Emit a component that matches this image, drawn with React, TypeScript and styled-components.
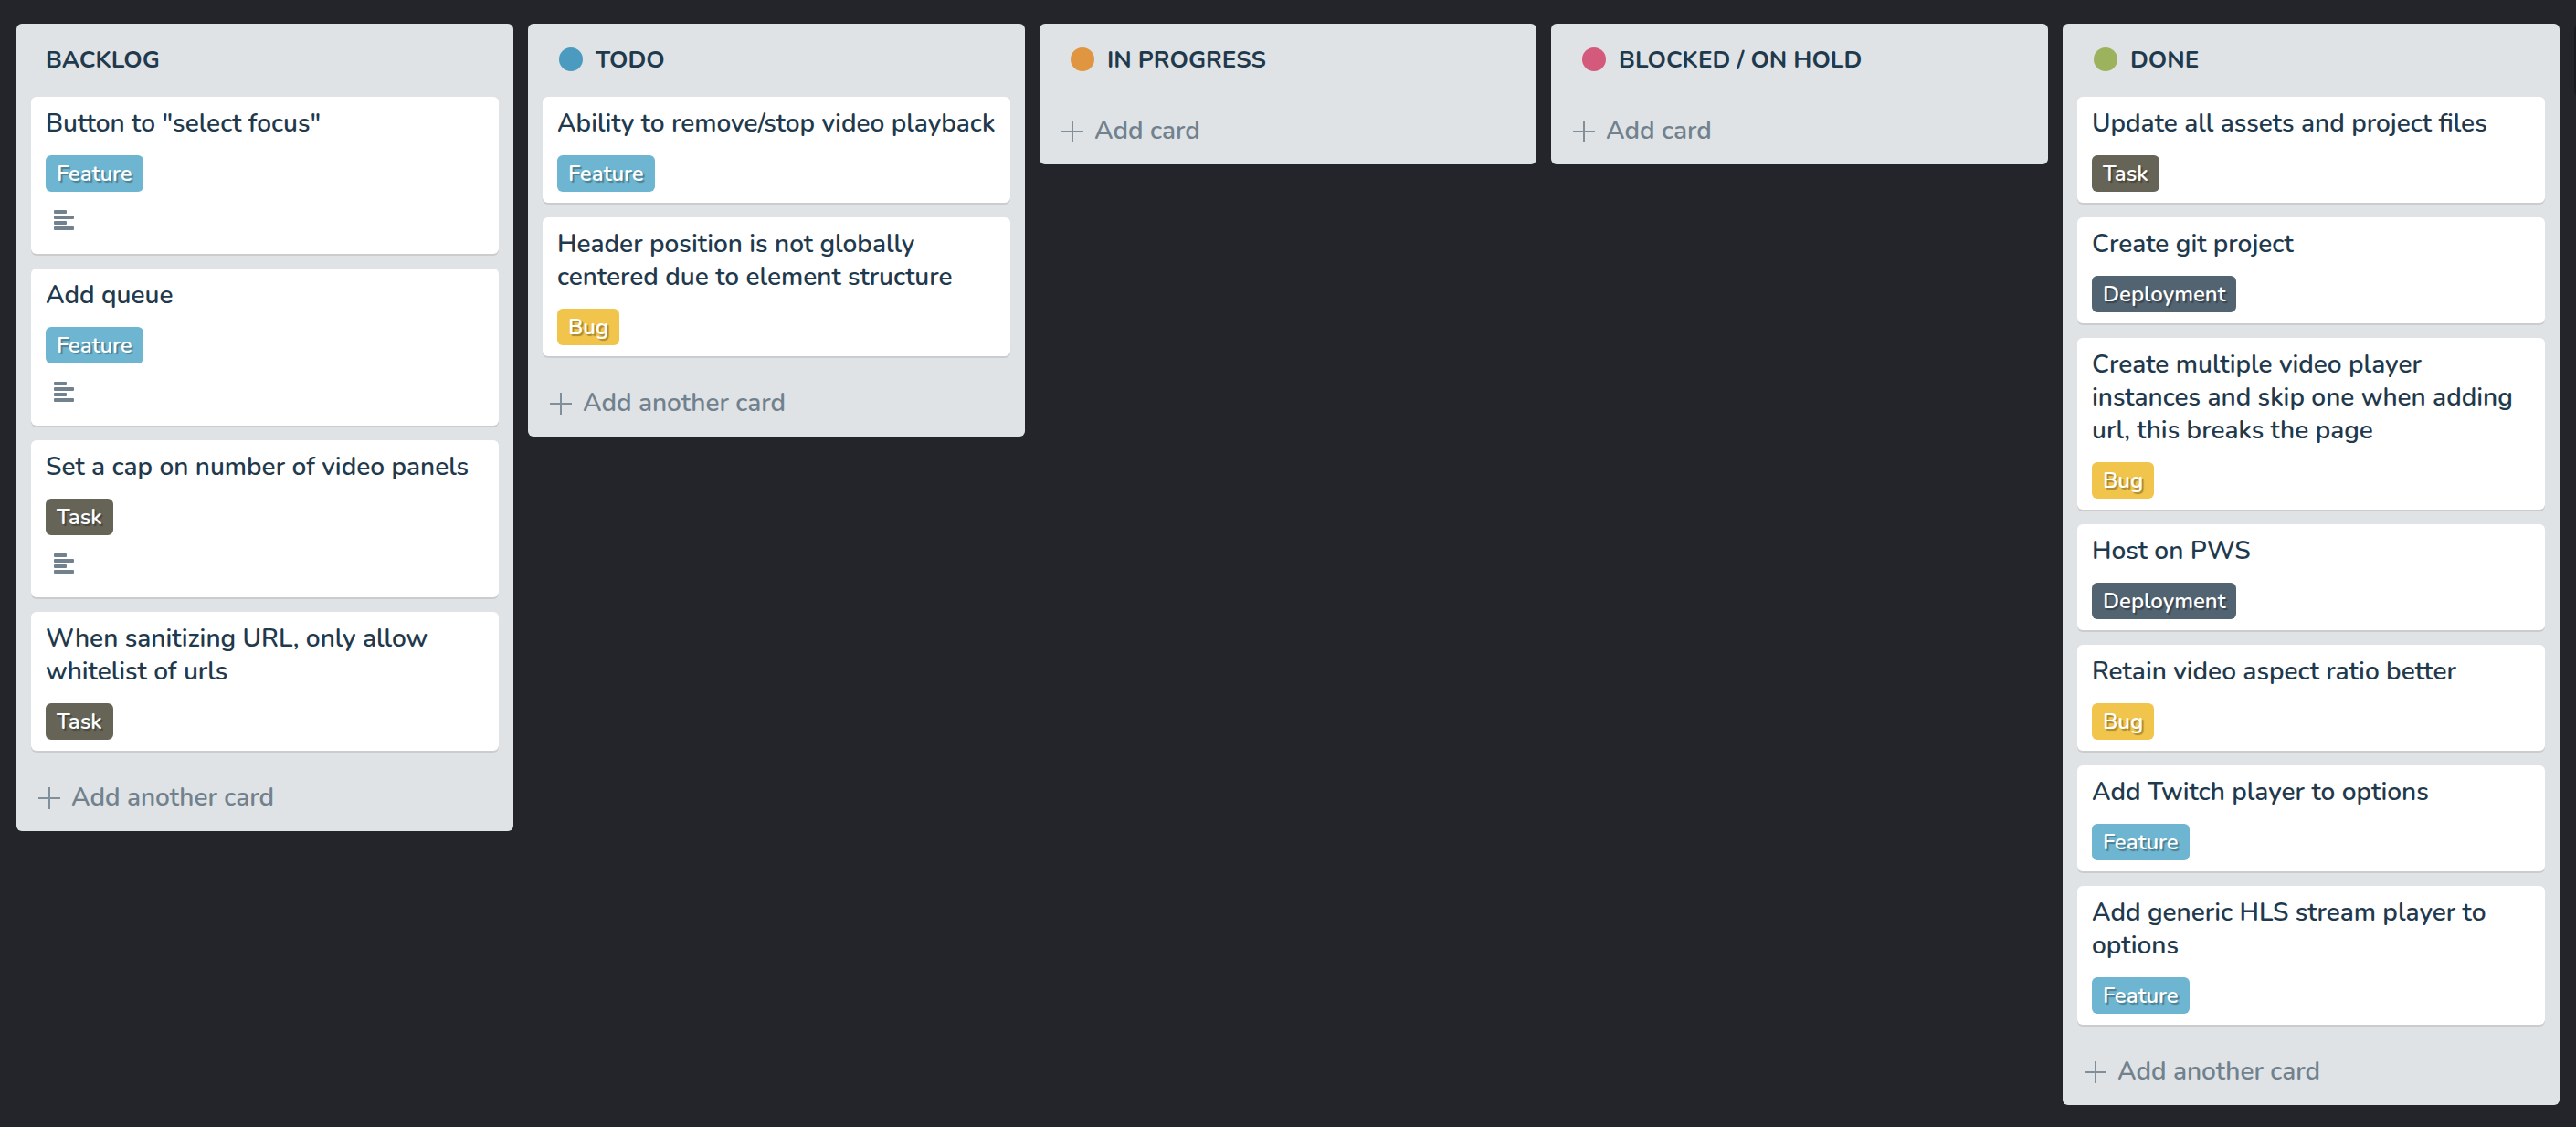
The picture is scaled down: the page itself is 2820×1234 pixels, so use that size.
import React from "react";
import styled, { createGlobalStyle } from "styled-components";

type LabelKind = "Feature" | "Bug" | "Task" | "Deployment";

interface CardData {
  title: string;
  label: LabelKind;
  hasDescription?: boolean;
}

interface ListData {
  name: string;
  dot?: string;
  cards: CardData[];
}

const labelColors: Record<LabelKind, string> = {
  Feature: "#6db5d1",
  Bug: "#f1c54b",
  Task: "#666457",
  Deployment: "#526371",
};

const lists: ListData[] = [
  {
    name: "BACKLOG",
    cards: [
      { title: 'Button to "select focus"', label: "Feature", hasDescription: true },
      { title: "Add queue", label: "Feature", hasDescription: true },
      { title: "Set a cap on number of video panels", label: "Task", hasDescription: true },
      { title: "When sanitizing URL, only allow whitelist of urls", label: "Task" },
    ],
  },
  {
    name: "TODO",
    dot: "#4a9bbf",
    cards: [
      { title: "Ability to remove/stop video playback", label: "Feature" },
      { title: "Header position is not globally centered due to element structure", label: "Bug" },
    ],
  },
  { name: "IN PROGRESS", dot: "#e09640", cards: [] },
  { name: "BLOCKED / ON HOLD", dot: "#d45a7c", cards: [] },
  {
    name: "DONE",
    dot: "#9cb25d",
    cards: [
      { title: "Update all assets and project files", label: "Task" },
      { title: "Create git project", label: "Deployment" },
      {
        title: "Create multiple video player instances and skip one when adding url, this breaks the page",
        label: "Bug",
      },
      { title: "Host on PWS", label: "Deployment" },
      { title: "Retain video aspect ratio better", label: "Bug" },
      { title: "Add Twitch player to options", label: "Feature" },
      { title: "Add generic HLS stream player to options", label: "Feature" },
    ],
  },
];

const GlobalStyle = createGlobalStyle`
  *, *::before, *::after { box-sizing: border-box; }
  body {
    margin: 0;
    background: #24252a;
    color: #1f394d;
    font-family: Nunito, Lato, "Open Sans", sans-serif;
    font-size: 28px;
    font-weight: 600;
    line-height: 36px;
  }
`;

/* Five lists fill the window; the edge of the next slot peeks in on the right. */
const Board = styled.main`
  display: grid;
  grid-auto-flow: column;
  grid-auto-columns: max(320px, calc((100% - 82px) / 5));
  align-items: start;
  gap: 16px;
  min-height: 100vh;
  padding: 26px 0 24px 18px;
  overflow-x: auto;
  scrollbar-width: none;
`;

const List = styled.section`
  padding: 0 16px;
  border-radius: 6px;
  background: #dfe3e6;
`;

const EmptySlot = styled.div`
  height: 80px;
  border-radius: 6px;
  background: #1b1c20;
`;

const ListHeader = styled.header`
  display: flex;
  align-items: center;
  gap: 14px;
  padding: 22px 16px;
`;

const Dot = styled.span<{ $color: string }>`
  flex: none;
  width: 26px;
  height: 26px;
  margin: 0 0 2px 2px;
  border-radius: 50%;
  background: ${(p) => p.$color};
`;

const ListName = styled.h2`
  margin: 0;
  font-size: 26px;
  font-weight: 700;
`;

const Cards = styled.ul`
  display: flex;
  flex-direction: column;
  gap: 16px;
  margin: 0;
  padding: 0 0 14px;
  list-style: none;
`;

const Card = styled.li`
  padding: 11px 16px 12px;
  border-radius: 6px;
  background: #fff;
  box-shadow: 0 2px 0 #cbccce;
`;

const CardTitle = styled.h3`
  margin: 0 0 17px;
  font-size: 28px;
  font-weight: 600;
`;

const Label = styled.span<{ $kind: LabelKind }>`
  display: block;
  width: fit-content;
  padding: 0 12px;
  border-radius: 6px;
  background: ${(p) => labelColors[p.$kind]};
  color: #fff;
  font-size: 24px;
  line-height: 40px;
  text-shadow: 2px 2px 1px rgba(0, 0, 0, 0.3);
`;

const CardMeta = styled.div`
  display: flex;
  padding: 20px 8px 14px;
  color: #71818d;
`;

const AddButton = styled.button`
  display: flex;
  align-items: center;
  gap: 12px;
  width: 100%;
  padding: 19px 8px;
  border: 0;
  background: none;
  color: #71818d;
  font: inherit;
  text-align: left;
  cursor: pointer;
`;

const PlusGlyph = styled.svg`
  flex: none;
  margin-top: 2px;
`;

function DescriptionIcon() {
  return (
    <svg width="24" height="22" viewBox="0 0 24 22" fill="currentColor" role="img" aria-label="Has description">
      <rect x="1" y="0" width="14" height="4" rx="1" />
      <rect x="1" y="6" width="22" height="4" rx="1" />
      <rect x="1" y="12" width="14" height="4" rx="1" />
      <rect x="1" y="18" width="22" height="4" rx="1" />
    </svg>
  );
}

function PlusIcon() {
  return (
    <PlusGlyph width="24" height="24" viewBox="0 0 24 24" stroke="currentColor" strokeWidth="2" opacity="0.85" aria-hidden="true">
      <path d="M12 0V24M0 12H24" />
    </PlusGlyph>
  );
}

export default function App() {
  return (
    <>
      <GlobalStyle />
      <Board>
        {lists.map((list) => (
          <List key={list.name} aria-label={list.name}>
            <ListHeader>
              {list.dot && <Dot $color={list.dot} />}
              <ListName>{list.name}</ListName>
            </ListHeader>
            {list.cards.length > 0 && (
              <Cards>
                {list.cards.map((card) => (
                  <Card key={card.title}>
                    <CardTitle>{card.title}</CardTitle>
                    <Label $kind={card.label}>{card.label}</Label>
                    {card.hasDescription && (
                      <CardMeta>
                        <DescriptionIcon />
                      </CardMeta>
                    )}
                  </Card>
                ))}
              </Cards>
            )}
            <AddButton type="button">
              <PlusIcon />
              {list.cards.length > 0 ? "Add another card" : "Add card"}
            </AddButton>
          </List>
        ))}
        <EmptySlot />
      </Board>
    </>
  );
}
